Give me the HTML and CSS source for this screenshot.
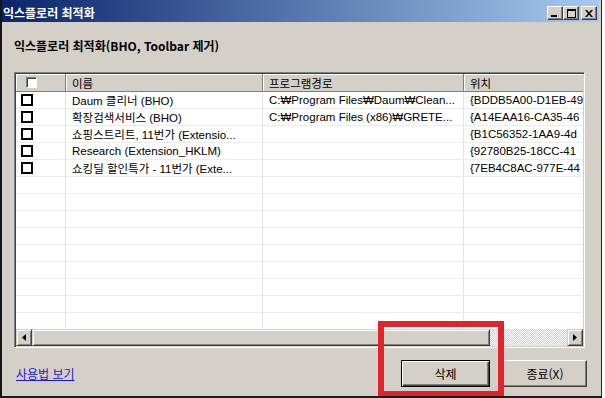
FILE: index.html
```html
<!DOCTYPE html>
<html lang="ko">
<head>
  <meta charset="UTF-8">
  <title>익스플로러 최적화</title>
  <link rel="stylesheet" href="styles.css">
</head>
<body>
  <div class="window">
    <div class="titlebar">
      <span class="title">익스플로러 최적화</span>
      <div class="caption-buttons">
        <span class="cap-btn"><svg width="8" height="7" viewBox="0 0 8 7"><rect x="0" y="5" width="6" height="2" fill="#000"/></svg></span>
        <span class="cap-btn"><svg width="9" height="9" viewBox="0 0 9 9"><rect x="0.5" y="0.5" width="8" height="8" fill="none" stroke="#000"/><rect x="0" y="0" width="9" height="2" fill="#000"/></svg></span>
        <span class="cap-btn close"><svg width="8" height="7" viewBox="0 0 8 7"><path d="M0 0h2l2 2.5L6 0h2L5 3.5 8 7H6L4 4.5 2 7H0l3-3.5z" fill="#000"/></svg></span>
      </div>
    </div>

    <div class="client">
      <h1 class="heading">익스플로러 최적화(BHO, Toolbar 제거)</h1>

      <!-- list of add-ons -->
      <div class="listview">
        <div class="list-area">
          <table class="list">
            <colgroup>
              <col class="c-chk">
              <col class="c-name">
              <col class="c-path">
              <col class="c-pos">
            </colgroup>
            <thead>
              <tr>
                <th><span class="hdr-box"></span></th>
                <th>이름</th>
                <th>프로그램경로</th>
                <th>위치</th>
              </tr>
            </thead>
            <tbody>
              <tr><td><span class="box"></span></td><td>Daum 클리너 (BHO)</td><td>C:₩Program Files₩Daum₩Clean...</td><td>{BDDB5A00-D1EB-49</td></tr>
              <tr><td><span class="box"></span></td><td>확장검색서비스 (BHO)</td><td>C:₩Program Files (x86)₩GRETE...</td><td>{A14EAA16-CA35-46</td></tr>
              <tr><td><span class="box"></span></td><td>쇼핑스트리트, 11번가 (Extensio...</td><td></td><td>{B1C56352-1AA9-4d</td></tr>
              <tr><td><span class="box"></span></td><td>Research (Extension_HKLM)</td><td></td><td>{92780B25-18CC-41</td></tr>
              <tr><td><span class="box"></span></td><td>쇼킹딜 할인특가 - 11번가 (Exte...</td><td></td><td>{7EB4C8AC-977E-44</td></tr>
              <tr><td></td><td></td><td></td><td></td></tr>
              <tr><td></td><td></td><td></td><td></td></tr>
              <tr><td></td><td></td><td></td><td></td></tr>
              <tr><td></td><td></td><td></td><td></td></tr>
              <tr><td></td><td></td><td></td><td></td></tr>
              <tr><td></td><td></td><td></td><td></td></tr>
              <tr><td></td><td></td><td></td><td></td></tr>
              <tr><td></td><td></td><td></td><td></td></tr>
              <tr><td></td><td></td><td></td><td></td></tr>
              <tr><td></td><td></td><td></td><td></td></tr>
            </tbody>
          </table>
        </div>
        <div class="hscroll">
          <span class="sb-btn"><svg width="4" height="7" viewBox="0 0 4 7"><path d="M4 0v7L0 3.5z" fill="#000"/></svg></span>
          <span class="sb-thumb"></span>
          <span class="sb-track"></span>
          <span class="sb-btn"><svg width="4" height="7" viewBox="0 0 4 7"><path d="M0 0v7l4-3.5z" fill="#000"/></svg></span>
        </div>
      </div>

      <div class="footer">
        <a class="help-link" href="#">사용법 보기</a>
        <div class="actions">
          <button class="btn btn-default">삭제</button>
          <button class="btn btn-close">종료(X)</button>
        </div>
      </div>
    </div>

    <div class="highlight"></div>
  </div>
</body>
</html>
```

FILE: styles.css
```css
body {
  margin: 0;
  background: #fff;
  font-family: "Liberation Sans", "Noto Sans CJK KR", sans-serif;
  font-size: 12px;
  color: #000;
}

.window {
  position: relative;
  width: 602px;
  height: 398px;
  box-sizing: border-box;
  border-left: 2px solid #161616;
  border-right: 1px solid #262626;
  border-bottom: 2px solid #1c1c1c;
  padding-right: 2px;
  background: #d4d0c8;
  overflow: hidden;
}

/* title bar */
.titlebar {
  display: flex;
  align-items: center;
  height: 18px;
  padding: 4px 2px 0 1px;
  background: linear-gradient(to right, #0a246a, #a6caf0);
}

.title {
  color: #fff;
  font-family: "Noto Sans CJK KR", sans-serif;
  font-weight: bold;
  font-size: 12px;
  line-height: 14px;
}

.caption-buttons {
  display: flex;
  margin-left: auto;
}

.cap-btn {
  display: flex;
  align-items: center;
  justify-content: center;
  width: 16px;
  height: 14px;
  box-sizing: border-box;
  background: #d4d0c8;
  border: 1px solid;
  border-color: #fff #404040 #404040 #fff;
  box-shadow: inset -1px -1px #808080;
}

.cap-btn.close {
  margin-left: 2px;
}

/* client area */
.client {
  padding: 0 0 0 12px;
}

.heading {
  margin: 16px 0 0 0;
  font-family: "Noto Sans CJK KR", sans-serif;
  font-size: 12px;
  font-weight: bold;
  line-height: 16px;
}

.listview {
  display: flex;
  flex-direction: column;
  width: 571px;
  height: 276px;
  margin-top: 18px;
  box-sizing: border-box;
  border: 1px solid;
  border-color: #808080 #fff #fff #808080;
  box-shadow: inset 1px 1px #404040, inset -1px -1px #d4d0c8;
  padding: 1px;
}

.list-area {
  flex: 1;
  overflow: hidden;
  background: #fff;
}

.list {
  width: 600px;
  table-layout: fixed;
  border-collapse: separate;
  border-spacing: 0;
}

.c-chk { width: 50px; }
.c-name { width: 197px; }
.c-path { width: 201px; }
.c-pos { width: 152px; }

.list th {
  height: 18px;
  padding: 0 6px;
  box-sizing: border-box;
  text-align: left;
  font-weight: normal;
  font-size: 11.5px;
  background: #d4d0c8;
  border-right: 1px solid #808080;
  border-bottom: 1px solid #808080;
  box-shadow: inset 1px 1px #fff;
  white-space: nowrap;
}

.list td {
  height: 17px;
  padding: 0 6px;
  box-sizing: border-box;
  font-size: 11.5px;
  border-right: 1px solid #e4e4e4;
  border-bottom: 1px solid #ececec;
  white-space: nowrap;
  overflow: hidden;
}

.list th:first-child,
.list td:first-child {
  padding: 0;
}

.hdr-box {
  display: block;
  width: 11px;
  height: 11px;
  margin-left: 10px;
  box-sizing: border-box;
  background: #fff;
  border: 1px solid;
  border-color: #808080 #fff #fff #808080;
  box-shadow: inset 1px 1px #404040;
}

.box {
  display: block;
  width: 12px;
  height: 12px;
  margin-left: 5px;
  box-sizing: border-box;
  border: 2px solid #000;
  background: #fff;
}

/* horizontal scroll bar */
.hscroll {
  display: flex;
  height: 17px;
}

.sb-btn,
.sb-thumb {
  box-sizing: border-box;
  background: #d4d0c8;
  border: 1px solid;
  border-color: #d4d0c8 #404040 #404040 #d4d0c8;
  box-shadow: inset 1px 1px #fff, inset -1px -1px #808080;
}

.sb-btn {
  display: flex;
  align-items: center;
  justify-content: center;
  width: 16px;
}

.sb-thumb {
  width: 458px;
}

.sb-track {
  flex: 1;
  background: repeating-conic-gradient(#fff 0 25%, #d4d0c8 0 50%) 0 0 / 2px 2px;
}

/* footer */
.footer {
  display: flex;
  align-items: center;
  margin-top: 12px;
  padding: 0 12px 0 2px;
}

.help-link {
  color: #1a1acc;
  font-family: "Noto Sans CJK KR", sans-serif;
  font-size: 12px;
}

.actions {
  display: flex;
  gap: 13px;
  margin-left: auto;
}

.btn {
  height: 27px;
  padding: 0;
  font-family: "Noto Sans CJK KR", sans-serif;
  font-size: 12px;
  color: #000;
  background: #d4d0c8;
  border: 1px solid;
  border-color: #fff #404040 #404040 #fff;
  box-shadow: inset -1px -1px #808080;
}

.btn-default {
  width: 89px;
  border: 1px solid #000;
  box-shadow: inset 1px 1px #fff, inset -1px -1px #404040, inset -2px -2px #808080;
}

.btn-close {
  width: 84px;
}

/* red marker drawn over the screenshot */
.highlight {
  position: absolute;
  left: 376px;
  top: 321px;
  width: 126px;
  height: 76px;
  box-sizing: border-box;
  border: 6px solid #e0242c;
}
```
